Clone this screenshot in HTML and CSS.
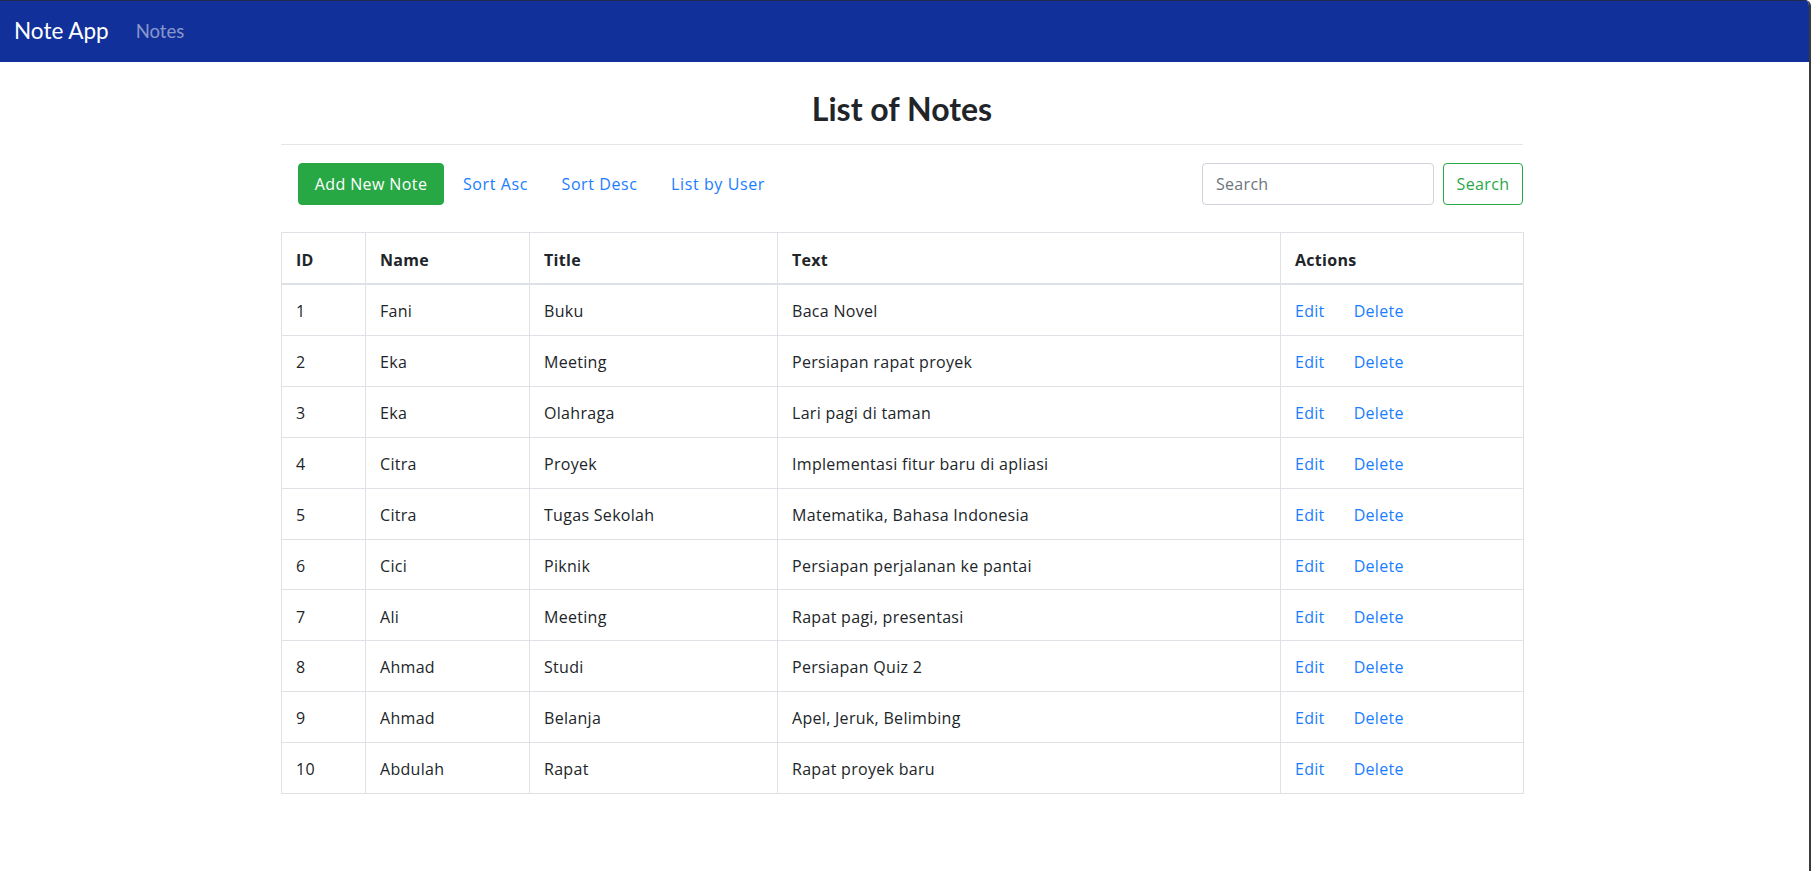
FILE: index.html
```html
<!DOCTYPE html>
<html lang="en">
<head>
<meta charset="utf-8">
<title>Note App</title>
<link rel="stylesheet" href="styles.css">
</head>
<body>
<div class="window">
  <nav class="navbar">
    <a class="brand" href="#">Note App</a>
    <a class="nav-link" href="#">Notes</a>
  </nav>
  <main class="container">
    <h2 class="title">List of Notes</h2>
    <hr class="divider">
    <div class="toolbar">
      <div class="toolbar-left">
        <button class="btn btn-success" type="button">Add New Note</button>
        <a class="link" href="#">Sort Asc</a>
        <a class="link" href="#">Sort Desc</a>
        <a class="link" href="#">List by User</a>
      </div>
      <form class="search">
        <input class="search-input" type="text" placeholder="Search">
        <button class="btn btn-outline" type="button">Search</button>
      </form>
    </div>
    <table class="notes">
      <colgroup>
        <col class="c-id"><col class="c-name"><col class="c-title"><col class="c-text"><col class="c-actions">
      </colgroup>
      <thead>
        <tr><th>ID</th><th>Name</th><th>Title</th><th>Text</th><th>Actions</th></tr>
      </thead>
      <tbody>
        <tr><td>1</td><td>Fani</td><td>Buku</td><td>Baca Novel</td><td><a class="act" href="#">Edit</a><a class="act" href="#">Delete</a></td></tr>
        <tr><td>2</td><td>Eka</td><td>Meeting</td><td>Persiapan rapat proyek</td><td><a class="act" href="#">Edit</a><a class="act" href="#">Delete</a></td></tr>
        <tr><td>3</td><td>Eka</td><td>Olahraga</td><td>Lari pagi di taman</td><td><a class="act" href="#">Edit</a><a class="act" href="#">Delete</a></td></tr>
        <tr><td>4</td><td>Citra</td><td>Proyek</td><td>Implementasi fitur baru di apliasi</td><td><a class="act" href="#">Edit</a><a class="act" href="#">Delete</a></td></tr>
        <tr><td>5</td><td>Citra</td><td>Tugas Sekolah</td><td>Matematika, Bahasa Indonesia</td><td><a class="act" href="#">Edit</a><a class="act" href="#">Delete</a></td></tr>
        <tr><td>6</td><td>Cici</td><td>Piknik</td><td>Persiapan perjalanan ke pantai</td><td><a class="act" href="#">Edit</a><a class="act" href="#">Delete</a></td></tr>
        <tr><td>7</td><td>Ali</td><td>Meeting</td><td>Rapat pagi, presentasi</td><td><a class="act" href="#">Edit</a><a class="act" href="#">Delete</a></td></tr>
        <tr><td>8</td><td>Ahmad</td><td>Studi</td><td>Persiapan Quiz 2</td><td><a class="act" href="#">Edit</a><a class="act" href="#">Delete</a></td></tr>
        <tr><td>9</td><td>Ahmad</td><td>Belanja</td><td>Apel, Jeruk, Belimbing</td><td><a class="act" href="#">Edit</a><a class="act" href="#">Delete</a></td></tr>
        <tr><td>10</td><td>Abdulah</td><td>Rapat</td><td>Rapat proyek baru</td><td><a class="act" href="#">Edit</a><a class="act" href="#">Delete</a></td></tr>
      </tbody>
    </table>
  </main>
</div>
</body>
</html>
```
FILE: styles.css
```css
* { box-sizing: border-box; }
html, body { margin: 0; padding: 0; background: #ffffff; }
body {
  font-family: "Open Sans", "Noto Sans", Arial, sans-serif;
  font-size: 16px;
  letter-spacing: 0.3px;
  color: #212529;
}
.window {
  min-height: 871px;
  border-right: 2px solid #3a3a3a;
  border-top-right-radius: 6px;
  overflow: hidden;
}
.navbar {
  height: 62px;
  background: #11309a;
  border-top: 1px solid #22294a;
  display: flex;
  align-items: center;
  padding: 0 14px 2px;
  letter-spacing: 0;
}
.brand {
  font-family: Lato, "Open Sans", sans-serif;
  color: #ffffff;
  font-size: 22.5px;
  text-decoration: none;
  margin-right: 27px;
}
.nav-link {
  font-family: Lato, "Open Sans", sans-serif;
  color: rgba(255, 255, 255, 0.5);
  font-size: 18.5px;
  text-decoration: none;
}
.container {
  width: 1242px;
  margin-left: 281px;
}
.title {
  font-family: Lato, "Open Sans", sans-serif;
  letter-spacing: 0;
  margin: 28.3px 0 0;
  text-align: center;
  font-size: 32px;
  line-height: 38.4px;
  font-weight: 700;
  color: #212529;
}
.divider {
  margin: 15.7px 0 0;
  border: 0;
  border-top: 1px solid rgba(0, 0, 0, 0.1);
}
.toolbar {
  margin-top: 18px;
  display: flex;
  justify-content: space-between;
  align-items: center;
  padding-left: 17px;
}
.toolbar-left {
  display: flex;
  align-items: center;
}
.btn {
  font-family: inherit;
  font-size: 16px;
  letter-spacing: 0.4px;
  line-height: 24px;
  height: 42px;
  padding: 8px 8px;
  border-radius: 4px;
  border: 1px solid transparent;
  cursor: pointer;
}
.btn-success {
  background: #28a745;
  border-color: #28a745;
  color: #ffffff;
  width: 146px;
}
.btn-outline {
  background: #ffffff;
  border-color: #28a745;
  color: #28a745;
  width: 80px;
  margin-left: 9px;
}
.link {
  color: #1a7dff;
  text-decoration: none;
  letter-spacing: 0.6px;
}
.btn-success + .link { margin-left: 19px; }
.link + .link { margin-left: 33.5px; }
.search {
  display: flex;
  align-items: center;
  margin: 0;
}
.search-input {
  width: 232px;
  height: 42px;
  border: 1px solid #ced4da;
  border-radius: 4px;
  padding: 0 13px;
  font-family: inherit;
  font-size: 16px;
  letter-spacing: 0.3px;
  color: #495057;
}
.search-input::placeholder { color: #6c757d; }
.notes {
  margin-top: 27px;
  width: 1242px;
  border-collapse: collapse;
  table-layout: fixed;
}
.c-id { width: 84px; }
.c-name { width: 164px; }
.c-title { width: 248px; }
.c-text { width: 503px; }
.c-actions { width: 243px; }
.notes th, .notes td {
  border: 1px solid #dee2e6;
  padding: 14.2px 14px 11.68px;
  line-height: 24px;
  text-align: left;
  vertical-align: top;
}
.notes th {
  font-weight: 700;
  border-bottom: 2px solid #dee2e6;
}
.act {
  color: #1a7dff;
  text-decoration: none;
  margin-right: 29px;
}
```
